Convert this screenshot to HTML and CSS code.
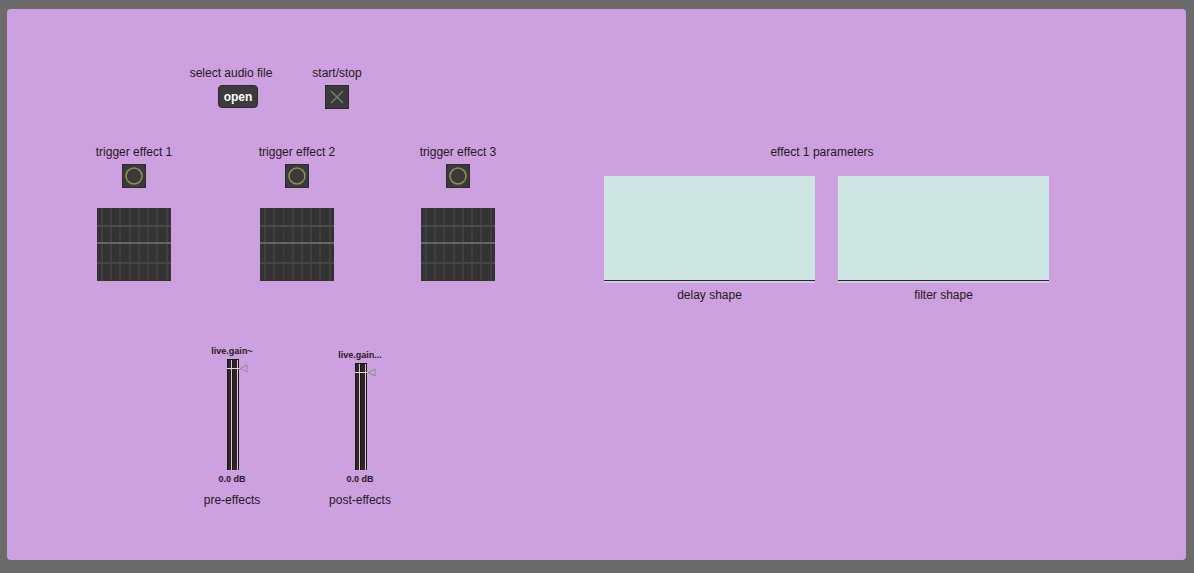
FILE: index.html
```html
<!DOCTYPE html>
<html>
<head>
<meta charset="utf-8">
<link rel="stylesheet" href="styles.css">
</head>
<body>
<div class="panel">
  <div class="row row-top">
    <div class="obj obj-file">
      <div class="label">select audio file</div>
      <button class="open-btn">open</button>
    </div>
    <div class="obj obj-start">
      <div class="label">start/stop</div>
      <div class="toggle">
        <svg width="24" height="24" viewBox="0 0 24 24"><path d="M6 6 L18 18 M18 6 L6 18" stroke="#6f7c66" stroke-width="1.6" fill="none"/></svg>
      </div>
    </div>
  </div>

  <div class="row row-mid">
    <div class="obj trig t1">
      <div class="label">trigger effect 1</div>
      <div class="bang"><svg width="24" height="24" viewBox="0 0 24 24"><circle cx="12" cy="12" r="8" stroke="#8f8b4c" stroke-width="1.6" fill="none"/></svg></div>
      <div class="grid"></div>
    </div>
    <div class="obj trig t2">
      <div class="label">trigger effect 2</div>
      <div class="bang"><svg width="24" height="24" viewBox="0 0 24 24"><circle cx="12" cy="12" r="8" stroke="#8f8b4c" stroke-width="1.6" fill="none"/></svg></div>
      <div class="grid"></div>
    </div>
    <div class="obj trig t3">
      <div class="label">trigger effect 3</div>
      <div class="bang"><svg width="24" height="24" viewBox="0 0 24 24"><circle cx="12" cy="12" r="8" stroke="#8f8b4c" stroke-width="1.6" fill="none"/></svg></div>
      <div class="grid"></div>
    </div>
    <div class="effects">
      <div class="label eff-title">effect 1 parameters</div>
      <div class="shapes">
        <div class="shape">
          <div class="shape-box"></div>
          <div class="label caption">delay shape</div>
        </div>
        <div class="shape">
          <div class="shape-box"></div>
          <div class="label caption">filter shape</div>
        </div>
      </div>
    </div>
  </div>

  <div class="row row-gain">
    <div class="obj gain g1">
      <div class="small">live.gain~</div>
      <div class="meter">
        <div class="bar"></div><div class="bar"></div>
        <div class="zero"></div>
        <svg class="tri" width="9" height="9" viewBox="0 0 9 9"><path d="M1 4.5 L8 1 L8 8 Z" stroke="#8a8a8a" stroke-width="1" fill="none"/></svg>
      </div>
      <div class="small db">0.0 dB</div>
      <div class="label gcap">pre-effects</div>
    </div>
    <div class="obj gain g2">
      <div class="small">live.gain...</div>
      <div class="meter">
        <div class="bar"></div><div class="bar"></div>
        <div class="zero"></div>
        <svg class="tri" width="9" height="9" viewBox="0 0 9 9"><path d="M1 4.5 L8 1 L8 8 Z" stroke="#8a8a8a" stroke-width="1" fill="none"/></svg>
      </div>
      <div class="small db">0.0 dB</div>
      <div class="label gcap">post-effects</div>
    </div>
  </div>
</div>
</body>
</html>
```

FILE: styles.css
```css
html, body {
  margin: 0;
  padding: 0;
}
body {
  background: #6b6b6b;
  font-family: "Liberation Sans", Arial, sans-serif;
  color: #1e1a22;
  width: 1194px;
  height: 573px;
  overflow: hidden;
}
.panel {
  margin: 9px 0 0 7px;
  width: 1179px;
  height: 551px;
  background: #cda0e0;
  border-radius: 4px;
  padding-top: 57px;
  box-sizing: border-box;
}
.row {
  display: flex;
  align-items: flex-start;
}
.obj {
  display: flex;
  flex-direction: column;
  align-items: center;
}
.label {
  font-size: 12px;
  line-height: 14px;
  height: 14px;
  white-space: nowrap;
}
.row-top {
  margin-left: 174px;
}
.obj-file { width: 100px; }
.obj-start { width: 60px; margin-left: 26px; }
.open-btn {
  margin-top: 5px;
  margin-left: 14px;
  width: 40px;
  height: 23px;
  background: #3c3a3c;
  border: 1px solid #2e2a30;
  border-radius: 4px;
  color: #ffffff;
  font-family: "Liberation Sans", Arial, sans-serif;
  font-weight: bold;
  font-size: 12px;
  line-height: 20px;
  padding: 0;
}
.toggle {
  margin-top: 5px;
  width: 24px;
  height: 24px;
  background: #3b3a3b;
  box-sizing: border-box;
  border: 1px solid #2e2a30;
  display: flex;
}
.toggle svg { margin: -1px; }

.row-mid {
  margin-top: 36px;
  margin-left: 77px;
}
.trig { width: 100px; }
.t2 { margin-left: 63px; }
.t3 { margin-left: 61px; }
.bang {
  margin-top: 5px;
  width: 24px;
  height: 24px;
  background: #3b393b;
  box-sizing: border-box;
  border: 1px solid #2e2a30;
  display: flex;
}
.bang svg { margin: -1px; }
.grid {
  margin-top: 20px;
  width: 74px;
  height: 73px;
  background-color: #333333;
  background-image:
    linear-gradient(to bottom, transparent 17px, #4a4a4a 17px, #4a4a4a 19px, transparent 19px,
      transparent 34px, #666666 34px, #666666 36px, transparent 36px,
      transparent 54px, #464646 54px, #464646 56px, transparent 56px),
    repeating-linear-gradient(to right, #333333 0, #333333 4px, #3f3f3f 4px, #3f3f3f 6px, #333333 6px, #333333 9.25px);
}
.effects {
  margin-left: 96px;
  width: 445px;
  display: flex;
  flex-direction: column;
}
.eff-title {
  text-align: center;
  padding-right: 9px;
}
.shapes {
  margin-top: 17px;
  display: flex;
  gap: 23px;
}
.shape {
  width: 211px;
  display: flex;
  flex-direction: column;
  align-items: center;
}
.shape-box {
  width: 211px;
  height: 105px;
  box-sizing: border-box;
  background: #cde6e3;
  border-bottom: 1px solid #2b2233;
  box-shadow: 0 2px 0 #d9c4e6;
}
.caption {
  margin-top: 7px;
}

.row-gain {
  margin-top: 44px;
  margin-left: 195px;
}
.gain { width: 60px; }
.g2 { margin-left: 68px; margin-top: 4px; }
.small {
  font-size: 9px;
  font-weight: bold;
  line-height: 11px;
  height: 11px;
  white-space: nowrap;
}
.meter {
  position: relative;
  margin-top: 2px;
  margin-left: 1px;
  width: 12px;
  height: 111px;
  display: flex;
  gap: 1px;
  background: #1c1519;
  box-sizing: border-box;
  padding: 1px 1px 0 1px;
}
.g2 .meter { height: 107px; }
.bar {
  flex: 1;
  background: #2e2529;
  border-right: 1px solid #d8c8d0;
}
.bar:last-of-type { border-right: none; }
.zero {
  position: absolute;
  left: 0;
  right: 0;
  top: 9px;
  height: 1px;
  background: #e8dce4;
}
.tri {
  position: absolute;
  left: 12px;
  top: 5px;
}
.db {
  margin-top: 4px;
}
.gcap {
  margin-top: 8px;
}
```
